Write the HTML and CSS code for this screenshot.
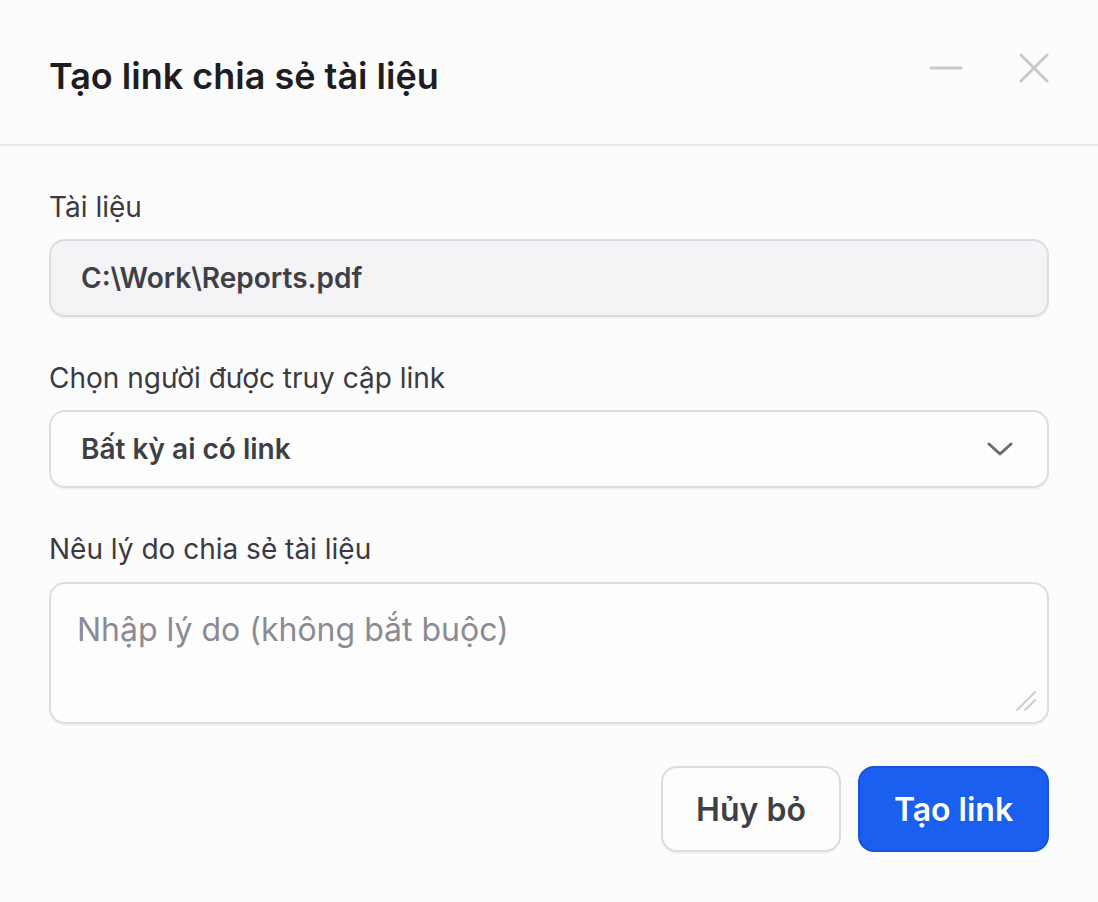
FILE: index.html
```html
<!DOCTYPE html>
<html lang="vi">
<head>
    <meta charset="UTF-8">
    <meta name="viewport" content="width=device-width, initial-scale=1.0">
    <title>Tạo link chia sẻ tài liệu</title>
    <link rel="stylesheet" href="styles.css">
</head>
<body>
    <div class="dialog">
        <div class="header">
            <h1 class="title">Tạo link chia sẻ tài liệu</h1>
            <div class="window-actions">
                <button class="icon-btn" aria-label="Thu nhỏ">
                    <svg width="34" height="6" viewBox="0 0 34 6"><line x1="2" y1="3" x2="32" y2="3" stroke="#c9c8cc" stroke-width="3" stroke-linecap="round"/></svg>
                </button>
                <button class="icon-btn" aria-label="Đóng">
                    <svg width="30" height="30" viewBox="0 0 30 30"><path d="M2 2 L28 28 M28 2 L2 28" stroke="#c9c8cc" stroke-width="3" stroke-linecap="round"/></svg>
                </button>
            </div>
        </div>

        <form class="form">
            <div class="field">
                <label class="label">Tài liệu</label>
                <div class="input readonly">C:\Work\Reports.pdf</div>
            </div>
            <div class="field">
                <label class="label">Chọn người được truy cập link</label>
                <div class="input select">
                    <span>Bất kỳ ai có link</span>
                    <svg width="26" height="16" viewBox="0 0 26 16"><path d="M2 3 L13 13 L24 3" fill="none" stroke="#6d6c72" stroke-width="3" stroke-linecap="round" stroke-linejoin="round"/></svg>
                </div>
            </div>
            <div class="field">
                <label class="label">Nêu lý do chia sẻ tài liệu</label>
                <div class="textarea-wrap">
                    <textarea class="textarea" placeholder="Nhập lý do (không bắt buộc)"></textarea>
                    <svg class="grip" width="22" height="22" viewBox="0 0 22 22"><path d="M2 20 L20 2 M10 20 L20 10" stroke="#cfced3" stroke-width="2" stroke-linecap="round"/></svg>
                </div>
            </div>
            <div class="actions">
                <button type="button" class="btn btn-secondary">Hủy bỏ</button>
                <button type="button" class="btn btn-primary">Tạo link</button>
            </div>
        </form>
    </div>
</body>
</html>
```

FILE: styles.css
```css
body {
    margin: 0;
    padding: 0;
    background: #fcfcfd;
    font-family: Inter, "Noto Sans", sans-serif;
    color: #3f3f46;
}
.dialog {
    width: 1098px;
    height: 902px;
}
.header {
    height: 146px;
    box-sizing: border-box;
    padding: 52px 49px 0 49px;
    border-bottom: 2px solid #ebebee;
    display: flex;
    justify-content: space-between;
    align-items: flex-start;
}
.title {
    margin: 0;
    font-size: 36px;
    line-height: 48px;
    font-weight: 600;
    color: #1d1d22;
}
.window-actions {
    display: flex;
    align-items: center;
    gap: 56px;
    margin-top: 1px;
}
.icon-btn {
    border: none;
    background: none;
    padding: 0;
    cursor: pointer;
    display: flex;
}
.form {
    padding: 43px 49px 0;
    display: flex;
    flex-direction: column;
    gap: 43px;
}
.field {
    display: flex;
    flex-direction: column;
    gap: 14px;
}
.label {
    font-size: 28px;
    line-height: 36px;
    color: #3a3a40;
}
.input {
    height: 78px;
    box-sizing: border-box;
    border: 2px solid #dddce0;
    border-radius: 16px;
    box-shadow: 0 2px 0 rgba(0, 0, 0, 0.04);
    padding: 0 30px;
    display: flex;
    align-items: center;
    font-size: 28px;
    font-weight: 600;
    color: #3f3f46;
}
.readonly {
    background: #f4f3f6;
}
.select {
    background: #fdfdfe;
    justify-content: space-between;
    padding-right: 34px;
}
.textarea-wrap {
    position: relative;
    display: flex;
}
.textarea {
    flex: 1;
    height: 142px;
    box-sizing: border-box;
    border: 2px solid #dddce0;
    border-radius: 16px;
    background: #fdfdfe;
    box-shadow: 0 2px 0 rgba(0, 0, 0, 0.04);
    padding: 28px 26px;
    font-family: Inter, "Noto Sans", sans-serif;
    font-size: 32px;
    line-height: 36px;
    color: #3f3f46;
    outline: none;
    resize: none;
    margin: 1px 0 0;
}
.textarea::placeholder {
    color: #8c8b91;
}
.grip {
    position: absolute;
    right: 12px;
    bottom: 12px;
    pointer-events: none;
}
.actions {
    display: flex;
    justify-content: flex-end;
    gap: 17px;
    margin-top: -1px;
}
.btn {
    height: 86px;
    border-radius: 16px;
    font-family: Inter, "Noto Sans", sans-serif;
    font-size: 32px;
    font-weight: 600;
    cursor: pointer;
    padding: 0;
}
.btn-secondary {
    width: 180px;
    background: #fdfdfe;
    border: 2px solid #dcdbdf;
    color: #3f3f46;
    box-shadow: 0 2px 0 rgba(0, 0, 0, 0.04);
}
.btn-primary {
    width: 191px;
    background: #1a5ff0;
    border: 2px solid #1654d8;
    color: #ffffff;
}
```
